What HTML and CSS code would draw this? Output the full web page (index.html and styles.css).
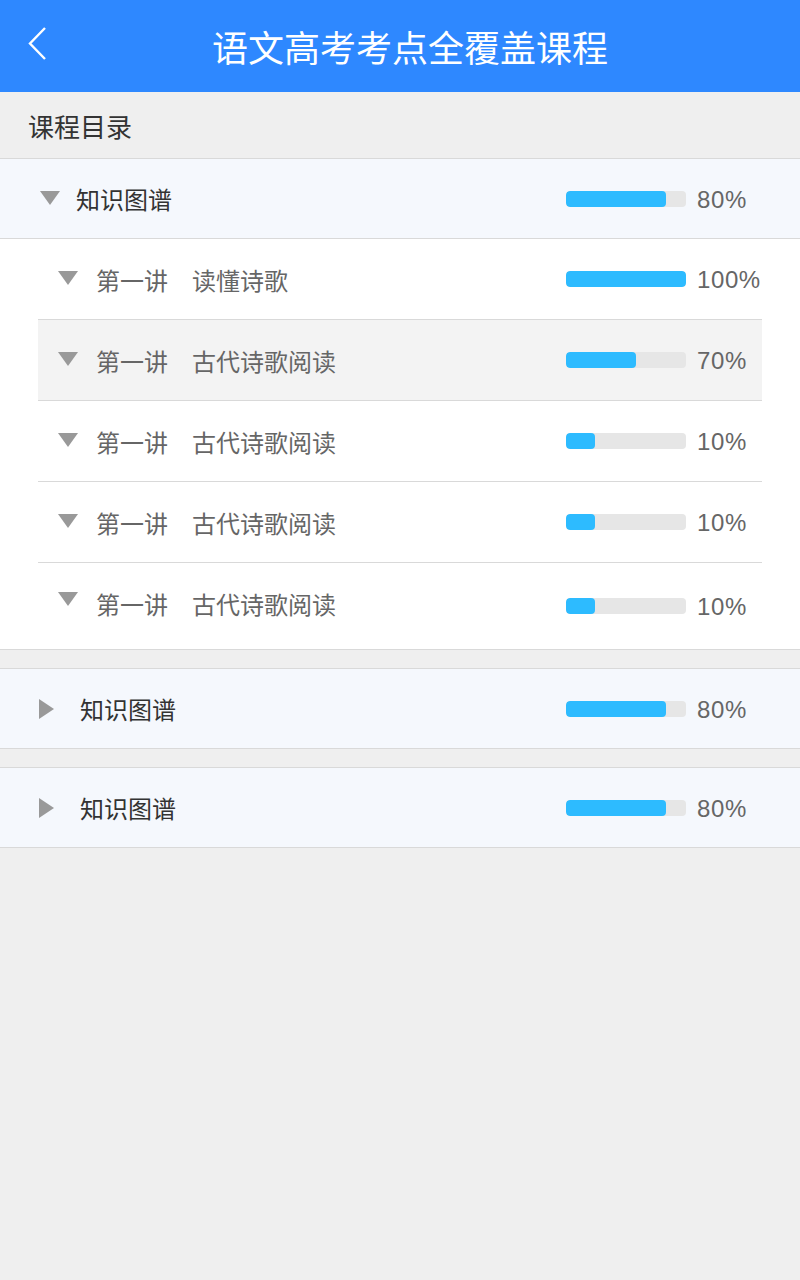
FILE: index.html
```html
<!DOCTYPE html>
<html lang="zh">
<head>
<meta charset="utf-8">
<link rel="stylesheet" href="styles.css">
</head>
<body>
<header class="topbar">
  <svg class="back" width="20" height="34" viewBox="0 0 20 34"><polyline points="17,1 2,16.5 17,32" fill="none" stroke="#fff" stroke-width="2.4"/></svg>
  <h1 class="title">语文高考考点全覆盖课程</h1>
</header>
<div class="toc-title">课程目录</div>

<section class="group">
  <div class="group-head">
    <span class="tri-down"></span>
    <span class="group-label">知识图谱</span>
    <div class="progress"><div class="bar"><div class="fill" style="width:100px"></div></div><span class="pct">80%</span></div>
  </div>
  <div class="lessons">
    <div class="lesson">
      <span class="tri-down"></span>
      <span class="lesson-label">第一讲　读懂诗歌</span>
      <div class="progress"><div class="bar"><div class="fill" style="width:120px"></div></div><span class="pct">100%</span></div>
    </div>
    <div class="lesson active">
      <span class="tri-down"></span>
      <span class="lesson-label">第一讲　古代诗歌阅读</span>
      <div class="progress"><div class="bar"><div class="fill" style="width:70px"></div></div><span class="pct">70%</span></div>
    </div>
    <div class="lesson">
      <span class="tri-down"></span>
      <span class="lesson-label">第一讲　古代诗歌阅读</span>
      <div class="progress"><div class="bar"><div class="fill" style="width:29px"></div></div><span class="pct">10%</span></div>
    </div>
    <div class="lesson">
      <span class="tri-down"></span>
      <span class="lesson-label">第一讲　古代诗歌阅读</span>
      <div class="progress"><div class="bar"><div class="fill" style="width:29px"></div></div><span class="pct">10%</span></div>
    </div>
    <div class="lesson last">
      <span class="tri-down"></span>
      <span class="lesson-label">第一讲　古代诗歌阅读</span>
      <div class="progress"><div class="bar"><div class="fill" style="width:29px"></div></div><span class="pct">10%</span></div>
    </div>
  </div>
</section>

<section class="group collapsed">
  <div class="group-head">
    <span class="tri-right"></span>
    <span class="group-label">知识图谱</span>
    <div class="progress"><div class="bar"><div class="fill" style="width:100px"></div></div><span class="pct">80%</span></div>
  </div>
</section>

<section class="group collapsed">
  <div class="group-head">
    <span class="tri-right"></span>
    <span class="group-label">知识图谱</span>
    <div class="progress"><div class="bar"><div class="fill" style="width:100px"></div></div><span class="pct">80%</span></div>
  </div>
</section>
</body>
</html>
```
FILE: styles.css
```css
html, body {
  margin: 0;
  padding: 0;
  background: #efefef;
  font-family: "Noto Sans CJK SC", "Noto Sans", sans-serif;
}
.topbar {
  height: 92px;
  background: #2e88ff;
  display: flex;
  align-items: center;
  position: relative;
}
.back {
  position: absolute;
  left: 28px;
  top: 27px;
}
.title {
  flex: 1;
  margin: 0;
  padding-left: 20px;
  text-align: center;
  color: #fff;
  font-size: 36px;
  font-weight: 400;
  line-height: 92px;
}
.toc-title {
  height: 67px;
  box-sizing: border-box;
  padding-left: 28px;
  display: flex;
  align-items: center;
  font-size: 26px;
  color: #333;
  border-bottom: 1px solid #d9d9d9;
}
.group {
  border-bottom: 1px solid #d9d9d9;
}
.group.collapsed {
  margin-top: 18px;
  border-top: 1px solid #d9d9d9;
}
.group-head {
  height: 79px;
  background: #f5f8fd;
  display: flex;
  align-items: center;
  padding-left: 40px;
}
.group .group-head + .lessons {
  border-top: 1px solid #d9d9d9;
}
.group-label {
  flex: 1;
  font-size: 24px;
  color: #333;
  margin-left: 16px;
}
.collapsed .group-head { padding-left: 39px; }
.collapsed .group-label { margin-left: 26px; }
.tri-down {
  width: 0;
  height: 0;
  border-left: 10px solid transparent;
  border-right: 10px solid transparent;
  border-top: 14px solid #999;
  margin-top: -2px;
}
.tri-right {
  width: 0;
  height: 0;
  border-top: 10px solid transparent;
  border-bottom: 10px solid transparent;
  border-left: 15px solid #999;
}
.lessons {
  background: #fff;
  padding: 0 38px;
}
.lesson {
  height: 80px;
  display: flex;
  align-items: center;
  padding-left: 20px;
  border-bottom: 1px solid #d9d9d9;
}
.lesson.active {
  background: #f3f3f3;
}
.lesson.last {
  height: 86px;
  border-bottom: none;
  align-items: flex-start;
  padding-top: 23px;
  box-sizing: border-box;
}
.lesson.last .tri-down { margin-top: 6px; }
.lesson.last .progress {
  margin-top: 9px;
  align-items: flex-start;
}
.lesson.last .bar { margin-top: 3px; }
.lesson-label {
  flex: 1;
  margin-left: 18px;
  font-size: 24px;
  color: #666;
  white-space: pre;
}
.progress {
  display: flex;
  align-items: center;
}
.bar {
  width: 120px;
  height: 16px;
  border-radius: 4px;
  background: #e6e6e6;
  overflow: hidden;
}
.fill {
  height: 100%;
  background: #2dbbff;
  border-radius: 4px;
}
.pct {
  margin-left: 11px;
  margin-top: 2px;
  font-family: "Liberation Sans", Arial, sans-serif;
  font-size: 24px;
  letter-spacing: 0.6px;
  line-height: 24px;
  color: #666;
  white-space: nowrap;
  width: 103px;
}
.lesson .pct {
  width: 65px;
}
.lesson.last .pct { margin-top: 0; }
```
